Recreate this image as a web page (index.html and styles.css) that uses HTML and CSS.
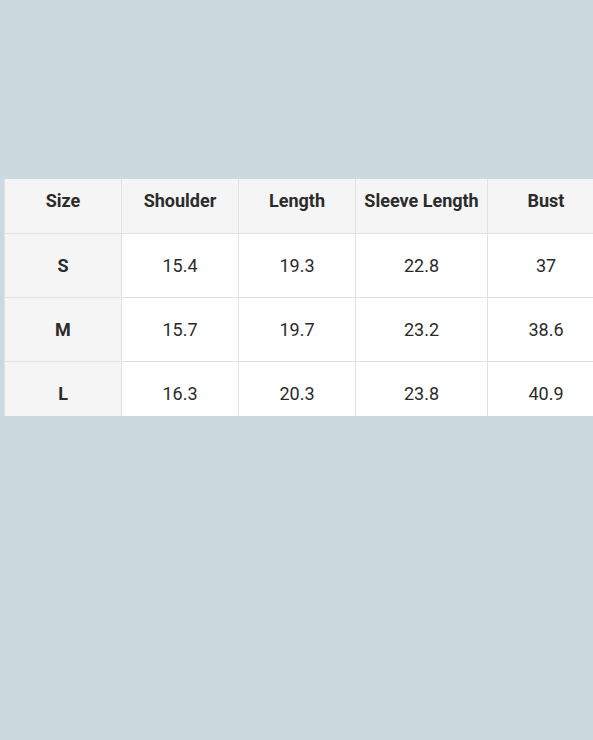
FILE: index.html
```html
<!DOCTYPE html>
<html>
<head>
<meta charset="utf-8">
<link rel="stylesheet" href="styles.css">
</head>
<body>
<div class="page">
  <div class="clip">
    <table class="sizes">
      <colgroup>
        <col class="c1"><col class="c2"><col class="c3"><col class="c4"><col class="c5">
      </colgroup>
      <thead>
        <tr><th>Size</th><th>Shoulder</th><th>Length</th><th>Sleeve Length</th><th>Bust</th></tr>
      </thead>
      <tbody>
        <tr><th>S</th><td>15.4</td><td>19.3</td><td>22.8</td><td>37</td></tr>
        <tr><th>M</th><td>15.7</td><td>19.7</td><td>23.2</td><td>38.6</td></tr>
        <tr><th>L</th><td>16.3</td><td>20.3</td><td>23.8</td><td>40.9</td></tr>
      </tbody>
    </table>
  </div>
</div>
</body>
</html>
```
FILE: styles.css
```css
html, body {
  margin: 0;
  padding: 0;
  background: #cbdadf;
  font-family: Roboto, "Noto Sans", sans-serif;
}
.page {
  width: 593px;
  height: 740px;
  overflow: hidden;
  padding: 179px 0 0 4px;
  box-sizing: border-box;
}
.clip {
  height: 237px;
  width: 589px;
  overflow: hidden;
}
.sizes {
  border-collapse: collapse;
  table-layout: fixed;
  width: 600px;
  background: #fff;
  color: #2b2b2b;
  font-size: 18px;
}
.c1, .c2, .c3, .c5 { width: 117px; }
.c4 { width: 132px; }
.sizes th, .sizes td {
  border: 1px solid #e2e2e2;
  text-align: center;
  padding: 0;
}
.sizes thead th {
  height: 54px;
  background: #f5f5f5;
  font-weight: 700;
  padding-bottom: 10px;
  box-sizing: border-box;
  border-top: none;
}
.sizes tbody th {
  background: #f5f5f5;
  font-weight: 700;
}
.sizes tbody tr { height: 64px; }
```
